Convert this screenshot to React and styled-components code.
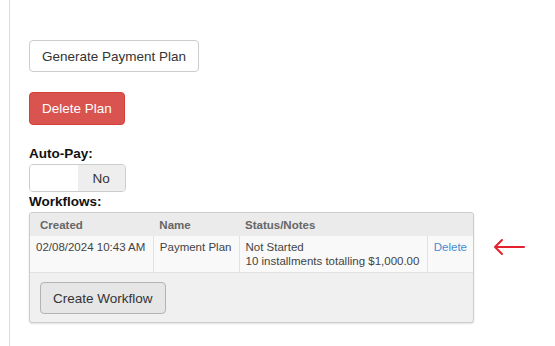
import React from 'react';
import styled, { createGlobalStyle } from 'styled-components';

const GlobalStyle = createGlobalStyle`
    html, body {
        margin: 0;
        padding: 0;
        background: #fff;
    }
    body {
        font-family: "Liberation Sans", Arial, sans-serif;
        color: #333;
    }
`;

const Page = styled.div`
    margin-left: 9px;
    min-height: 346px;
    border-left: 1px solid #dcdcdc;
    padding: 40px 0 0 19px;
    box-sizing: border-box;
`;

const Button = styled.button`
    display: block;
    box-sizing: border-box;
    height: ${p => p.$h || 33}px;
    padding: 0 12px;
    font-family: inherit;
    font-size: 13.5px;
    border-radius: 4px;
    border: 1px solid ${p => p.$danger ? '#d43f3a' : p.$grey ? '#b3b3b3' : '#ccc'};
    background: ${p => p.$danger ? '#d9534f' : p.$grey ? '#e6e6e6' : '#fff'};
    color: ${p => p.$danger ? '#fff' : '#333'};
    margin-bottom: ${p => p.$mb || 0}px;
`;

const Label = styled.div`
    font-weight: bold;
    font-size: 13.5px;
    line-height: 20px;
    color: #111;
`;

const Toggle = styled.div`
    display: flex;
    width: 97px;
    height: 28px;
    box-sizing: border-box;
    border: 1px solid #ccc;
    border-radius: 4px;
    overflow: hidden;
`;

const ToggleHalf = styled.div`
    flex: 1;
    display: flex;
    align-items: center;
    justify-content: center;
    font-size: 13.5px;
    background: ${p => p.$on ? '#eee' : '#fff'};
    color: #333;
`;

const PanelWrap = styled.div`
    position: relative;
    width: 445px;
`;

const Panel = styled.div`
    box-sizing: border-box;
    border: 1px solid #ccc;
    border-radius: 3px;
    background: #f0f0f0;
    box-shadow: 0 1px 2px rgba(0, 0, 0, 0.12);
    overflow: hidden;
`;

const Table = styled.table`
    width: 100%;
    border-collapse: collapse;
    font-size: 11.5px;
    line-height: 14px;
`;

const Th = styled.th`
    text-align: left;
    font-weight: bold;
    color: #666;
    background: #ebebeb;
    padding: 5px 6px 4px ${p => p.$first ? 10 : 6}px;
    width: ${p => p.$w ? `${p.$w}px` : 'auto'};
`;

const Td = styled.td`
    vertical-align: top;
    background: #f9f9f9;
    color: #444;
    padding: 4px 6px;
    border-bottom: 1px solid #e2e2e2;
    border-left: ${p => p.$first ? 'none' : '1px solid #e2e2e2'};
    white-space: nowrap;
`;

const Link = styled.a`
    color: #4a8bd0;
    text-decoration: none;
`;

const Footer = styled.div`
    padding: 9px 10px 8px;
`;

const Arrow = styled.svg`
    position: absolute;
    left: 463px;
    top: 25px;
`;

export default function App() {
    return (
        <>
            <GlobalStyle />
            <Page>
                <Button $h={32} $mb={20}>Generate Payment Plan</Button>
                <Button $danger $mb={19}>Delete Plan</Button>
                <Label>Auto-Pay:</Label>
                <Toggle>
                    <ToggleHalf />
                    <ToggleHalf $on>No</ToggleHalf>
                </Toggle>
                <Label>Workflows:</Label>
                <PanelWrap>
                    <Panel>
                        <Table>
                            <thead>
                                <tr>
                                    <Th $first $w={123}>Created</Th>
                                    <Th $w={85}>Name</Th>
                                    <Th $w={190}>Status/Notes</Th>
                                    <Th />
                                </tr>
                            </thead>
                            <tbody>
                                <tr>
                                    <Td $first>02/08/2024 10:43 AM</Td>
                                    <Td>Payment Plan</Td>
                                    <Td>
                                        Not Started<br />
                                        10 installments totalling $1,000.00
                                    </Td>
                                    <Td><Link href="#">Delete</Link></Td>
                                </tr>
                            </tbody>
                        </Table>
                        <Footer>
                            <Button $grey $h={32}>Create Workflow</Button>
                        </Footer>
                    </Panel>
                    <Arrow width="34" height="20" viewBox="0 0 34 20">
                        <path d="M3 10 H32 M10 3 L3 10 L10 17" fill="none" stroke="#e3222d" strokeWidth="2" strokeLinecap="round" strokeLinejoin="round" />
                    </Arrow>
                </PanelWrap>
            </Page>
        </>
    );
}
